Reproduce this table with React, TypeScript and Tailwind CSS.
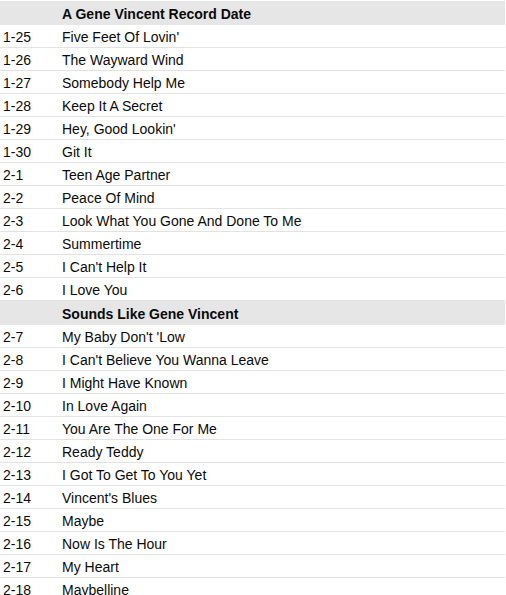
import React from 'react'

type Section = {
  title: string;
  tracks: [string, string][];
}

const sections: Section[] = [
  {
    title: 'A Gene Vincent Record Date',
    tracks: [
      ['1-25', "Five Feet Of Lovin'"],
      ['1-26', 'The Wayward Wind'],
      ['1-27', 'Somebody Help Me'],
      ['1-28', 'Keep It A Secret'],
      ['1-29', "Hey, Good Lookin'"],
      ['1-30', 'Git It'],
      ['2-1', 'Teen Age Partner'],
      ['2-2', 'Peace Of Mind'],
      ['2-3', 'Look What You Gone And Done To Me'],
      ['2-4', 'Summertime'],
      ['2-5', "I Can't Help It"],
      ['2-6', 'I Love You'],
    ],
  },
  {
    title: 'Sounds Like Gene Vincent',
    tracks: [
      ['2-7', "My Baby Don't 'Low"],
      ['2-8', "I Can't Believe You Wanna Leave"],
      ['2-9', 'I Might Have Known'],
      ['2-10', 'In Love Again'],
      ['2-11', 'You Are The One For Me'],
      ['2-12', 'Ready Teddy'],
      ['2-13', 'I Got To Get To You Yet'],
      ['2-14', "Vincent's Blues"],
      ['2-15', 'Maybe'],
      ['2-16', 'Now Is The Hour'],
      ['2-17', 'My Heart'],
      ['2-18', 'Maybelline'],
    ],
  },
]

export default function App() {
  return (
    <div className="w-[505px] pt-[1px] bg-white text-[14px] leading-none text-[#0a0a0a] font-['Helvetica','Liberation_Sans',sans-serif]">
      {sections.map((section) => (
        <div key={section.title}>
          {/* Section header */}
          <div className="flex h-[24px] items-center pt-[2px] bg-[#e6e6e6] font-bold">
            <div className="w-[62px] shrink-0" />
            <div>{section.title}</div>
          </div>
          {section.tracks.map(([num, name]) => (
            <div key={num} className="flex h-[23px] items-center pt-[2px] border-b border-[#e2e2e2]">
              <div className="w-[62px] shrink-0 pl-[3px]">{num}</div>
              <div>{name}</div>
            </div>
          ))}
        </div>
      ))}
    </div>
  )
}
